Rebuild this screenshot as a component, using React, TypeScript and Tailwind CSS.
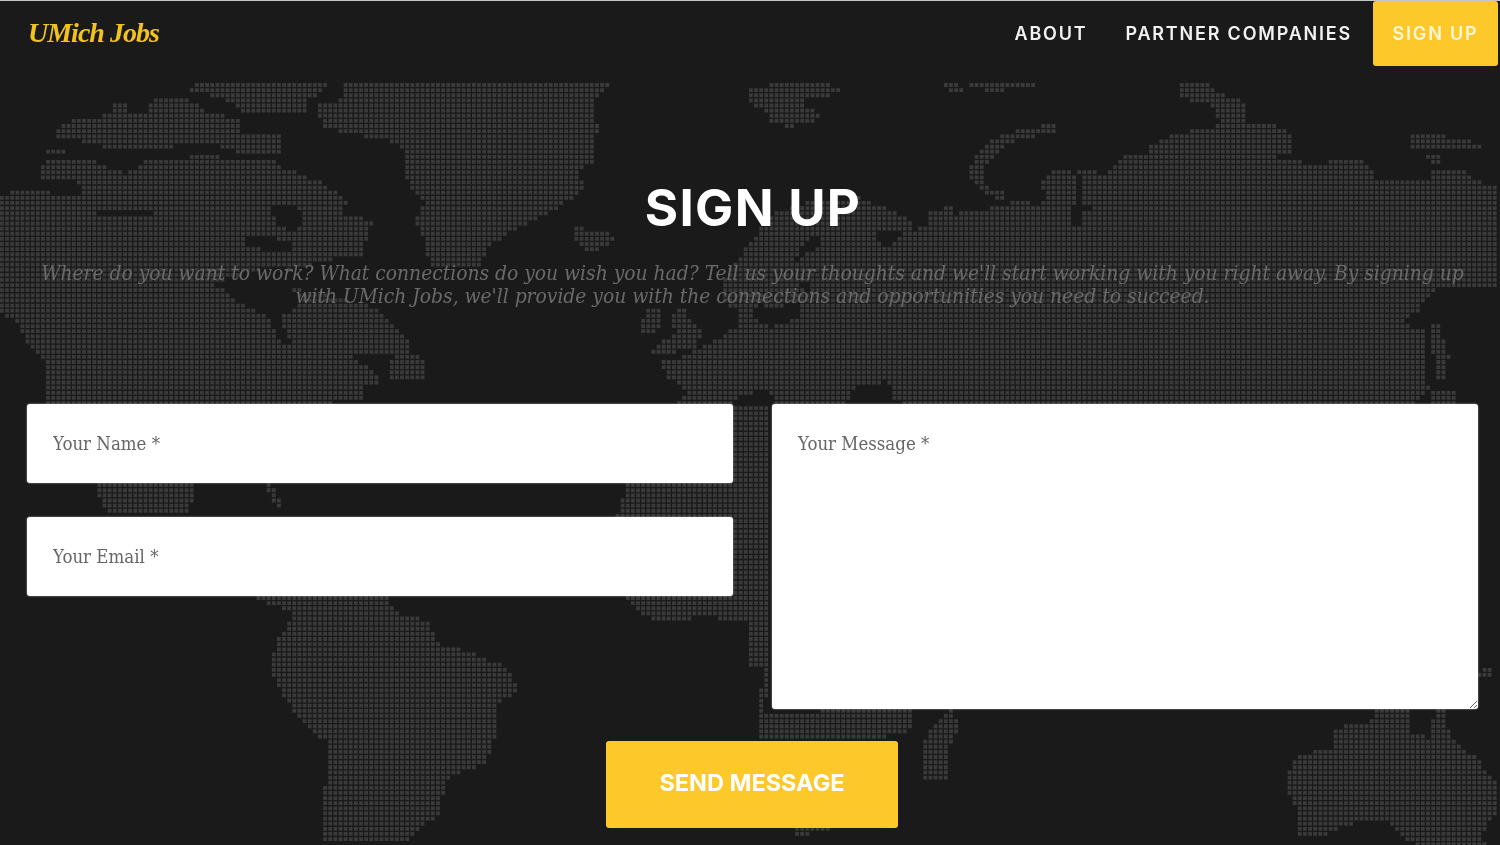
import React from "react";

const land: string[] = [
  // Greenland
  "318,105 345,98 345,80 617,80 596,100 598,130 596,160 581,170 584,190 555,210 522,227 493,243 478,267 430,267 426,243 416,220 426,203 416,193 407,177 407,150 388,140 350,133 325,127 318,115",
  // Arctic islands
  "196,80 335,80 306,103 306,112 244,112 234,103 192,90",
  "57,130 72,120 96,120 110,113 115,103 127,103 127,113 148,113 153,100 191,100 210,113 239,117 239,133 282,133 282,153 239,153 210,143 163,147 115,150 91,143 57,137",
  "47,150 67,150 67,153 47,153",
  // North America
  "0,197 10,192 48,192 80,195 85,185 75,182 42,180 42,167 52,157 93,157 97,163 117,170 125,173 143,165 147,160 183,160 190,155 217,155 223,160 273,160 280,167 293,167 307,177 320,177 333,190 347,200 345,213 363,218 373,223 368,237 364,257 335,258 292,270 268,267 215,283 240,303 268,317 280,340 287,347 292,345 280,318 295,310 302,300 293,287 370,305 385,315 400,330 408,340 408,350 395,355 355,355 365,365 385,380 365,388 365,400 330,403 47,403 47,360 30,345 15,320 0,312",
  "392,357 405,350 424,357 424,380 392,380",
  // Central America below name input
  "95,483 232,483 194,483 194,503 184,515 114,515 100,500",
  "264,483 270,483 283,500 279,512 271,497",
  // South America
  "259,597 388,597 398,612 428,620 440,643 465,650 497,662 512,672 517,690 497,707 495,740 485,763 473,770 453,773 445,790 440,813 428,823 413,838 398,843 321,843 321,803 328,780 328,743 303,723 289,703 271,673 276,643 289,623 294,610 279,607 259,600",
  // Iceland, UK
  "570,230 580,225 587,232 610,230 617,238 603,247 593,253 583,247 575,237",
  "648,308 662,308 663,318 657,333 643,333 643,323",
  "677,308 688,308 688,318 703,330 698,347 667,353 653,353 657,343 675,333 673,320",
  // Top island
  "750,87 788,82 822,82 843,88 831,95 807,98 807,107 822,113 817,122 786,127 769,120 764,108 750,103",
  // Arctic small
  "939,80 960,82 963,92 949,90",
  "970,81 1036,81 1036,86 1004,87 1004,91 984,91 984,86 970,86",
  // Arc
  "1056,123 1056,133 1023,138 1004,148 989,160 984,173 984,185 1001,190 1010,200 995,197 980,190 970,175 970,165 980,150 995,138 1020,130",
  // Eurasia
  "663,362 680,357 703,347 737,327 737,310 723,303 723,280 743,253 760,230 773,213 790,210 790,207 813,200 860,197 893,210 910,220 912,230 927,227 927,210 943,210 951,202 956,213 980,210 1008,203 1013,198 1037,205 1047,200 1042,183 1056,167 1066,167 1075,173 1085,168 1104,173 1114,167 1118,157 1147,153 1147,145 1161,140 1176,133 1195,130 1214,130 1221,120 1212,107 1202,102 1181,98 1178,90 1178,80 1207,80 1221,93 1248,103 1243,113 1250,122 1276,125 1291,133 1291,152 1272,158 1315,163 1339,160 1362,160 1372,167 1374,183 1386,177 1391,182 1429,177 1434,170 1470,172 1477,180 1500,187 1500,287 1434,290 1420,310 1405,320 1405,325 1425,327 1429,390 1415,403 678,403 687,390 667,377",
  "1430,323 1440,323 1450,357 1445,378 1437,378",
  "1432,392 1456,392 1456,403 1432,403",
  "1413,135 1444,135 1449,140 1470,140 1482,145 1482,148 1413,147",
  "1427,155 1441,155 1444,163 1432,165",
  // Africa
  "627,483 771,483 771,517 617,517",
  "735,403 771,403 771,700 762,700 762,667 747,667 747,623 735,620",
  "627,597 733,597 746,623 746,657 761,680 766,712 911,708 911,730 870,740 757,741 757,723 761,680 746,657 746,623 726,622 706,613 687,620 662,623 642,613",
  "793,828 833,828 800,837 793,837",
  // Madagascar
  "954,708 958,720 958,733 952,737 950,777 924,780 922,753 929,730 944,717",
  // Australia
  "1377,708 1409,708 1409,730 1431,737 1436,708 1446,708 1446,723 1456,740 1476,757 1496,780 1496,813 1481,837 1486,845 1421,845 1402,837 1389,820 1362,820 1337,830 1317,837 1300,837 1297,810 1287,790 1292,760 1317,750 1332,747 1334,730 1352,722 1377,720",
  "1480,670 1492,665 1492,675 1480,678",
];

const seas: string[] = [
  "273,203 297,203 306,220 297,230 282,227 273,213",
  "244,233 287,240 297,247 282,253 250,247",
  "98,208 150,208 153,217 100,216",
  "810,237 827,233 817,247 800,260 787,263 797,257",
  "877,233 903,233 893,243 887,247 877,242",
  "753,307 763,303 773,310 790,303 803,303 800,317 770,327 757,317",
  "800,283 813,283 807,292",
  "732,403 742,397 763,387 773,397 773,403",
  "847,403 860,383 877,387 888,377 893,397 903,403",
  "1075,175 1080,175 1080,205 1090,203 1095,212 1082,212 1080,228 1072,225 1075,205",
];

type Pt = [number, number];
const parse = (s: string): Pt[] => s.split(" ").map((p) => p.split(",").map(Number) as Pt);
const landPolys = land.map(parse);
const seaPolys = seas.map(parse);

function inside(x: number, y: number, poly: Pt[]) {
  let hit = false;
  for (let i = 0, j = poly.length - 1; i < poly.length; j = i++) {
    const [xi, yi] = poly[i];
    const [xj, yj] = poly[j];
    if (yi > y !== yj > y && x < ((xj - xi) * (y - yi)) / (yj - yi) + xi) hit = !hit;
  }
  return hit;
}

function dottedPath() {
  const pitch = 5.13;
  const size = 3.8;
  const parts: string[] = [];
  for (let r = 0; r * pitch < 845; r++) {
    for (let c = 0; c * pitch < 1500; c++) {
      const x = c * pitch;
      const y = r * pitch;
      const cx = x + pitch / 2;
      const cy = y + pitch / 2;
      if (landPolys.some((p) => inside(cx, cy, p)) && !seaPolys.some((p) => inside(cx, cy, p))) {
        parts.push(`M${x.toFixed(2)} ${y.toFixed(2)}h${size}v${size}h-${size}z`);
      }
    }
  }
  return parts.join("");
}

const mapPath = dottedPath();

function WorldMap() {
  return (
    <svg className="absolute inset-0" width="1500" height="845" viewBox="0 0 1500 845">
      <path d={mapPath} fill="#3a3a3a" />
    </svg>
  );
}

const fieldClass =
  "w-full bg-white rounded-[3px] border-0 outline-none pl-[26px] pr-[25px] text-[18.5px] font-medium text-[#666] placeholder:text-[#666] shadow-[0_0_2px_#aaa] [font-family:'DejaVu_Serif_Condensed','DejaVu_Serif',serif]";

export default function App() {
  return (
    <div className="relative w-[1500px] h-[845px] overflow-hidden bg-[#1a1a1a] border-t border-[#c8c8c8] blur-[0.6px]">
      <WorldMap />
      <div className="relative flex flex-col h-full">
        <header className="flex items-start justify-between pl-[28px] pr-[2px] h-[66px]">
          <a className="mt-[13px] text-[28px] leading-[38px] font-bold italic text-[#f2c21e] tracking-[-1px] [font-family:'Liberation_Serif',serif]">
            UMich Jobs
          </a>
          <nav className="flex items-start text-[18px] font-semibold tracking-[1.8px] text-white [font-family:Inter,sans-serif]">
            <a className="mt-[22px] leading-[22px] mr-[38px] text-[#f2f2f2]">ABOUT</a>
            <a className="mt-[22px] leading-[22px] mr-[21px] text-[#f2f2f2]">PARTNER COMPANIES</a>
            <a className="flex items-center justify-center w-[125px] h-[65px] bg-[#fdc82a] rounded-[3px] text-[#fff6d8]">SIGN UP</a>
          </nav>
        </header>

        <main className="flex flex-col pl-[27px] pr-[22px]">
          <h1 className="mt-[111px] text-center pl-[1px] text-[51px] leading-[60px] font-bold text-white tracking-[1.3px] [font-family:Inter,sans-serif]">
            SIGN UP
          </h1>
          <p className="mt-[24px] mx-auto w-[1451px] text-center text-[20.8px] leading-[22.5px] italic text-[#6a6a6a] [font-family:'DejaVu_Serif_Condensed','DejaVu_Serif',serif]">
            Where do you want to work? What connections do you wish you had? Tell us your thoughts and we'll start working with you right away. By signing up
            <br />
            with UMich Jobs, we'll provide you with the connections and opportunities you need to succeed.
          </p>

          <form className="mt-[97px] flex flex-col">
            <div className="grid grid-cols-[706px_706px] gap-x-[39px]">
              <div className="flex flex-col gap-[34px]">
                <input className={`${fieldClass} h-[79px]`} placeholder="Your Name *" />
                <input className={`${fieldClass} h-[79px]`} placeholder="Your Email *" />
              </div>
              <textarea
                className={`${fieldClass} h-[305px] pt-[29px] leading-[22px] resize`}
                placeholder="Your Message *"
              />
            </div>
            <button
              type="button"
              className="mt-[32px] ml-[579px] w-[292px] h-[87px] pb-[3px] bg-[#fdc82a] rounded-[3px] text-[23.5px] font-bold text-white [font-family:Inter,sans-serif]"
            >
              SEND MESSAGE
            </button>
          </form>
        </main>
      </div>
    </div>
  );
}
